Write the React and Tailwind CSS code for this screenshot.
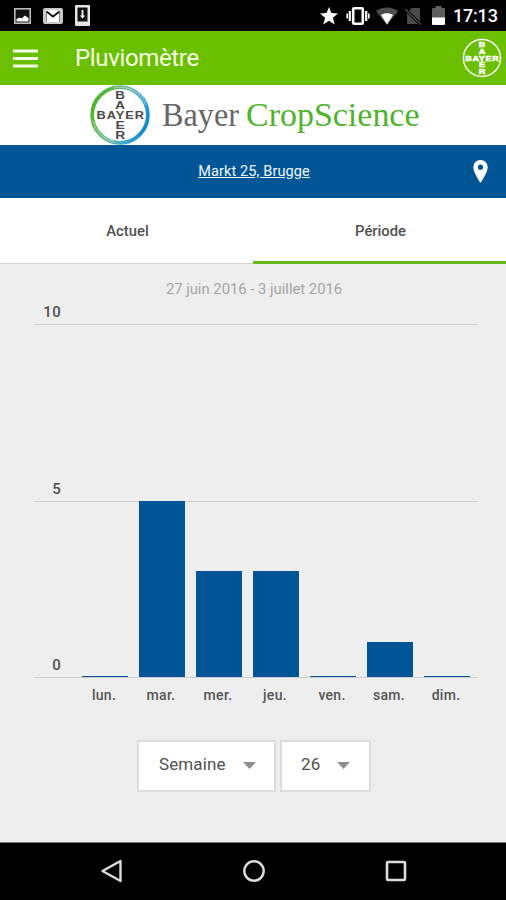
import React, { useState } from "react";

const days = [
  { label: "lun.", value: 0 },
  { label: "mar.", value: 5 },
  { label: "mer.", value: 3 },
  { label: "jeu.", value: 3 },
  { label: "ven.", value: 0 },
  { label: "sam.", value: 1 },
  { label: "dim.", value: 0 },
];

const MAX_VALUE = 10;
const CHART_HEIGHT = 353;

const StatusBar = () => (
  <div className="flex h-[31px] items-center justify-between bg-black pl-[14px] pr-[9px] text-white">
    <div className="flex items-center">
      <svg className="h-4 w-[17px]" viewBox="0 0 17 16">
        <rect x="0.8" y="0.8" width="15.4" height="14.4" fill="#111" stroke="#bbb" strokeWidth="1.6" />
        <path d="M2.5 13.5V11l3-1.5 2 1 3.5-3 3.5 2.5v3.5z" fill="#fff" />
      </svg>
      <svg className="ml-3 h-4 w-5" viewBox="0 0 20 16">
        <rect width="20" height="16" rx="2" fill="#c9c9c9" />
        <path d="M3.5 2h13v12h-13z" fill="#fff" />
        <path d="M3.5 3.5L10 8.5l6.5-5" fill="none" stroke="#111" strokeWidth="1.9" />
        <path d="M3.5 5v9M16.5 5v9" stroke="#888" strokeWidth="1" />
      </svg>
      <svg className="ml-3 h-[21px] w-[15px]" viewBox="0 0 15 21">
        <rect width="15" height="21" rx="1" fill="#e6e6e6" />
        <rect x="2.5" y="2.5" width="10" height="14" fill="#111" />
        <path d="M7.5 5v7" stroke="#fff" strokeWidth="1.8" />
        <path d="M4.9 10.5h5.2l-2.6 3z" fill="#fff" />
      </svg>
    </div>
    <div className="flex items-center">
      <svg className="h-[18px] w-[18px]" viewBox="0 0 18 18" fill="#fff">
        <path d="M9 0l2.4 6 6.6.4-5.1 4.3 1.8 6.8L9 13.8l-5.7 3.7 1.8-6.8L0 6.4 6.6 6z" />
      </svg>
      <svg className="ml-[8px] h-5 w-6" viewBox="0 0 24 20" fill="none" stroke="#fff">
        <rect x="7.2" y="2.2" width="9.6" height="15.6" rx="1" strokeWidth="2.6" />
        <path d="M3.8 5v10M20.2 5v10" strokeWidth="2.2" />
        <path d="M1.2 7.5v5M22.8 7.5v5" strokeWidth="1.6" />
      </svg>
      <svg className="ml-[6px] h-[18px] w-[22px]" viewBox="0 0 22 18">
        <path d="M0 4.2C6-.6 16-.6 22 4.2L11 18z" fill="#4d4d4d" />
        <path d="M5 8c3.5-2.2 8.500-2.2 12 0L11 17.500z" fill="#fff" />
      </svg>
      <svg className="ml-[7px] h-[18px] w-[17px]" viewBox="0 0 17 18">
        <path d="M6.500 1H14a1 1 0 0 1 1 1v12.500L4 4z" fill="#4a4a4a" />
        <path d="M2 6v10a1 1 0 0 0 1 1h10z" fill="#4a4a4a" />
        <path d="M0 2.2L16 17.6" stroke="#555" strokeWidth="1.2" />
      </svg>
      <svg className="ml-[10px] h-[19px] w-[13px]" viewBox="0 0 13 19">
        <path d="M4 0h5l1 2h2a1 1 0 0 1 1 1v9H0V3a1 1 0 0 1 1-1h2z" fill="#5e5e5e" />
        <path d="M0 11.500h13V18a1 1 0 0 1-1 1H1a1 1 0 0 1-1-1z" fill="#fff" />
      </svg>
      <span className="ml-2 w-[44px] whitespace-nowrap text-[18px] font-medium leading-none tracking-[-0.2px]">
        17:13
      </span>
    </div>
  </div>
);

// The name is written across and down, sharing the middle Y
const BayerMark = ({ className, color, ring, ringWidth, reversed }) => (
  <svg className={className} viewBox="0 0 60 60">
    <defs>
      <linearGradient id="ring" x1="0" y1="0.3" x2="1" y2="0.7">
        <stop offset="0" stopColor="#4db62c" />
        <stop offset="0.2" stopColor="#5cba4c" />
        <stop offset="0.5" stopColor="#6fb5a8" />
        <stop offset="0.75" stopColor="#3fa9d2" />
        <stop offset="1" stopColor="#0a86c8" />
      </linearGradient>
    </defs>
    <circle cx="30" cy="30" r="27.8" fill="none" stroke={ring} strokeWidth={ringWidth} />
    {!reversed && (
      <g fill="none" stroke="#fff" strokeWidth="0.8" opacity="0.6">
        <path d="M24 2.800A27.800 27.800 0 0 1 56 20" />
        <path d="M3 36A27.600 27.600 0 0 0 24 57" />
      </g>
    )}
    <g
      fill={color}
      stroke={color}
      strokeWidth={reversed ? 0.8 : 0}
      fontFamily="'Liberation Sans', Arial, sans-serif"
      fontWeight="700"
      fontSize="10.5"
    >
      <text
        x={reversed ? 5 : 6.5}
        y="33.8"
        letterSpacing="0.8"
        textLength={reversed ? 51 : 48.5}
        lengthAdjust="spacingAndGlyphs"
      >
        BAYER
      </text>
      <text x="25.2" y="13.6" textLength="9.6" lengthAdjust="spacingAndGlyphs">B</text>
      <text x="25" y="23.7" textLength="10" lengthAdjust="spacingAndGlyphs">A</text>
      <text x="25.4" y="44" textLength="9.4" lengthAdjust="spacingAndGlyphs">E</text>
      <text x="25.2" y="54.2" textLength="10" lengthAdjust="spacingAndGlyphs">R</text>
    </g>
  </svg>
);

const Select = ({ value, className }) => (
  <button
    className={`flex h-[52px] items-center border-2 border-[#dcdcdc] bg-white text-[17px] tracking-[0.1px] text-[#505050] ${className}`}
  >
    <span className="-mt-0.5">{value}</span>
    <svg className="-mt-px h-[7px] w-[13px]" viewBox="0 0 13 7">
      <path d="M0 0h13L6.5 7z" fill="#8f8f8f" />
    </svg>
  </button>
);

const Chart = () => (
  <div className="relative ml-[34px] mt-[60px] w-[444px]">
    {[10, 5, 0].map((tick) => (
      <div
        key={tick}
        className="absolute inset-x-0 border-t border-[#cdcdcd]"
        style={{ top: CHART_HEIGHT * (1 - tick / MAX_VALUE) }}
      >
        <span className="absolute right-[417px] top-[-22px] text-[15px] font-medium leading-[18px] tracking-[0.3px] text-[#505050]">
          {tick}
        </span>
      </div>
    ))}
    <div className="relative flex h-[353px] items-end gap-[11px] pl-[47.5px]">
      {days.map((day) => (
        <div
          key={day.label}
          className="w-[46px] bg-[#005596]"
          style={{ height: Math.max((day.value / MAX_VALUE) * CHART_HEIGHT, 1.5) }}
        />
      ))}
    </div>
    <div className="flex gap-[11px] pl-[47px] pt-[9px]">
      {days.map((day) => (
        <span
          key={day.label}
          className="w-[46px] text-center text-[14px] font-medium leading-[18px] tracking-[0.3px] text-[#555]"
        >
          {day.label}
        </span>
      ))}
    </div>
  </div>
);

const App = () => {
  const [tab, setTab] = useState("Période");

  return (
    <div className="flex h-[900px] w-[506px] flex-col overflow-hidden bg-[#eee] font-['Roboto',sans-serif]">
      <StatusBar />
      <header className="flex h-[54px] items-center bg-[#6abf00] pl-[13px] pr-[4px]">
        <svg className="h-[19px] w-[25px]" viewBox="0 0 25 19">
          <path d="M0 2h25M0 9.5h25M0 17h25" stroke="#f4ffe6" strokeWidth="3" />
        </svg>
        <h1 className="ml-[37px] flex-1 text-[24px] leading-none tracking-[-0.35px] text-[#f6ffe8]">
          Pluviomètre
        </h1>
        <BayerMark className="-mt-px h-10 w-10" color="#fff" ring="#fff" ringWidth="2.2" reversed />
      </header>
      <div className="flex h-[60px] items-center bg-white pl-[90px]">
        <BayerMark className="h-[60px] w-[60px]" color="#4a4a4a" ring="url(#ring)" ringWidth="3.8" />
        <svg
          className="ml-[11px] h-[60px] w-[270px]"
          viewBox="0 0 270 60"
          fontFamily="'Liberation Serif', 'Times New Roman', serif"
          fontSize="33"
        >
          <text x="1" y="40.5" fill="#666" textLength="77" lengthAdjust="spacingAndGlyphs">
            Bayer
          </text>
          <text x="85" y="40.5" fill="#4cb52c" textLength="173.5" lengthAdjust="spacingAndGlyphs">
            CropScience
          </text>
        </svg>
      </div>
      <div className="relative flex h-[53px] items-center justify-center bg-[#005596] pl-0.5">
        <a href="#" className="text-[14.5px] tracking-[0.12px] text-[#f2f7ff] underline">
          Markt 25, Brugge
        </a>
        <svg className="absolute right-[18px] top-[15px] h-[23px] w-[15px]" viewBox="0 0 15 24">
          <path
            fillRule="evenodd"
            fill="#fff"
            d="M7.5 0A7.4 7.4 0 0 0 0 7.6C0 13.2 7.5 24 7.5 24S15 13.2 15 7.6A7.4 7.4 0 0 0 7.5 0zm0 4.8a2.7 2.7 0 1 1 0 5.4 2.7 2.7 0 0 1 0-5.4z"
          />
        </svg>
      </div>
      <nav className="flex h-[66px] bg-white">
        {["Actuel", "Période"].map((name) => (
          <button
            key={name}
            onClick={() => setTab(name)}
            className={`flex-1 pl-0.5 text-[14.8px] font-medium text-[#505050] ${
              tab === name
                ? "border-b-[3px] border-[#66b81e] pt-[3px]"
                : "border-b border-[#d2d2d2] pt-px"
            }`}
          >
            {name}
          </button>
        ))}
      </nav>
      <main className="flex-1">
        <p className="-mb-[35px] pl-0.5 pt-4 text-center text-[14.8px] leading-[18px] text-[#a5a5a5]">
          27 juin 2016 - 3 juillet 2016
        </p>
        <div className="pt-[1px]">
          <Chart />
        </div>
        <div className="mt-[36px] flex gap-1 pl-[137px]">
          <Select value="Semaine" className="w-[139px] justify-between pl-5 pr-[18px]" />
          <Select value="26" className="w-[91px] justify-between pl-[19px] pr-[19px]" />
        </div>
      </main>
      <footer className="flex h-[58px] items-center justify-between border-t border-[#777] bg-black pl-[101px] pr-[99px]">
        <svg className="-mt-px h-6 w-[21px]" viewBox="0 0 21 24">
          <path d="M1.5 12L19.5 2v20z" fill="none" stroke="#ddd" strokeWidth="2.4" strokeLinejoin="round" />
        </svg>
        <svg className="-mt-px h-6 w-6" viewBox="0 0 24 24">
          <circle cx="12" cy="12" r="9.7" fill="none" stroke="#ddd" strokeWidth="2.4" />
        </svg>
        <svg className="-mt-0.5 h-[22px] w-[22px]" viewBox="0 0 22 22">
          <rect x="2" y="2" width="18" height="18" rx="1" fill="none" stroke="#ddd" strokeWidth="2.6" />
        </svg>
      </footer>
    </div>
  );
};

export default App;
